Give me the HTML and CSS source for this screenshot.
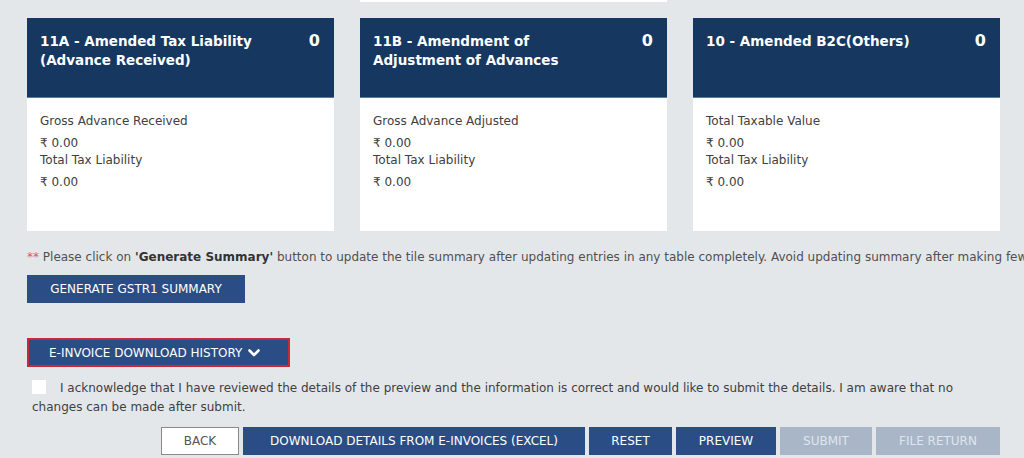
FILE: index.html
```html
<!DOCTYPE html>
<html lang="en">
<head>
<meta charset="utf-8">
<title>GSTR1</title>
<link rel="stylesheet" href="styles.css">
</head>
<body>
<div class="page">
  <div class="strip">
    <div></div>
    <div class="strip-card"></div>
    <div></div>
  </div>

  <div class="tiles">
    <div class="tile">
      <div class="tile-head">
        <div class="tile-title">11A - Amended Tax Liability (Advance Received)</div>
        <div class="tile-count">0</div>
      </div>
      <div class="tile-body">
        <div class="label">Gross Advance Received</div>
        <div class="value">₹ 0.00</div>
        <div class="label">Total Tax Liability</div>
        <div class="value">₹ 0.00</div>
      </div>
    </div>
    <div class="tile">
      <div class="tile-head">
        <div class="tile-title">11B - Amendment of Adjustment of Advances</div>
        <div class="tile-count">0</div>
      </div>
      <div class="tile-body">
        <div class="label">Gross Advance Adjusted</div>
        <div class="value">₹ 0.00</div>
        <div class="label">Total Tax Liability</div>
        <div class="value">₹ 0.00</div>
      </div>
    </div>
    <div class="tile">
      <div class="tile-head">
        <div class="tile-title">10 - Amended B2C(Others)</div>
        <div class="tile-count">0</div>
      </div>
      <div class="tile-body">
        <div class="label">Total Taxable Value</div>
        <div class="value">₹ 0.00</div>
        <div class="label">Total Tax Liability</div>
        <div class="value">₹ 0.00</div>
      </div>
    </div>
  </div>

  <p class="note"><span class="stars">**</span> Please click on <b>'Generate Summary'</b> button to update the tile summary after updating entries in any table completely. Avoid updating summary after making few changes.</p>

  <button class="btn btn-generate">GENERATE GSTR1 SUMMARY</button>

  <div class="einv-wrap">
    <button class="btn btn-einv">E-INVOICE DOWNLOAD HISTORY
      <svg class="chev" viewBox="0 0 12 10" width="12" height="10"><path d="M1.5 2.5 L6 7 L10.5 2.5" fill="none" stroke="#fff" stroke-width="2.6" stroke-linecap="round" stroke-linejoin="round"/></svg>
    </button>
  </div>

  <div class="ack">
    <span class="check"></span><span class="ack-text">I acknowledge that I have reviewed the details of the preview and the information is correct and would like to submit the details. I am aware that no changes can be made after submit.</span>
  </div>

  <div class="actions">
    <button class="btn btn-light">BACK</button>
    <button class="btn btn-download">DOWNLOAD DETAILS FROM E-INVOICES (EXCEL)</button>
    <button class="btn btn-reset">RESET</button>
    <button class="btn btn-preview">PREVIEW</button>
    <button class="btn btn-disabled btn-submit">SUBMIT</button>
    <button class="btn btn-disabled btn-file">FILE RETURN</button>
  </div>
</div>
</body>
</html>
```

FILE: styles.css
```css
html, body {
  margin: 0;
  padding: 0;
  background: #e4e7ea;
  overflow: hidden;
}

body {
  font-family: "DejaVu Sans", Verdana, sans-serif;
  font-size: 12px;
  color: #404040;
  width: 1024px;
  height: 458px;
}

.page {
  padding: 0 24px 0 27px;
}

.strip {
  display: grid;
  grid-template-columns: 307px 307px 307px;
  column-gap: 26px;
  height: 2px;
}

.strip-card {
  background: #ffffff;
}

.tiles {
  display: grid;
  grid-template-columns: 307px 307px 307px;
  column-gap: 26px;
  margin-top: 16px;
}

.tile {
  background: #ffffff;
  height: 213px;
  display: flex;
  flex-direction: column;
}

.tile-head {
  background: #163760;
  height: 80px;
  box-sizing: border-box;
  padding: 14px 14px 0 13px;
  display: flex;
  justify-content: space-between;
  align-items: flex-start;
  color: #ffffff;
  border-bottom: 1px solid #5a7aa3;
}

.tile-title {
  font-weight: bold;
  font-size: 13.5px;
  line-height: 19px;
  width: 240px;
}

.tile-count {
  font-weight: bold;
  font-size: 16px;
  line-height: 17px;
}

.tile-body {
  padding: 15px 13px 0 13px;
}

.label {
  line-height: 17px;
}

.value {
  line-height: 17px;
  margin-top: 5px;
}

.note {
  margin: 18px 0 0 0;
  width: 997px;
  overflow: hidden;
  white-space: nowrap;
  line-height: 17px;
  color: #505050;
}

.note b {
  color: #333;
}

.stars {
  color: #e05a5a;
}

.btn {
  font-family: "DejaVu Sans", Verdana, sans-serif;
  font-size: 12px;
  border: none;
  color: #ffffff;
  background: #2b4d85;
  height: 28px;
  padding: 0 22px;
  cursor: pointer;
  white-space: nowrap;
}

.btn-generate {
  display: block;
  margin-top: 9px;
  width: 218px;
  padding: 0;
}

.einv-wrap {
  margin-top: 35px;
  display: inline-block;
  border: 2px solid #c42a3c;
  line-height: 0;
}

.btn-einv {
  width: 259px;
  height: 25px;
  padding: 0 0 0 20px;
  text-align: left;
  display: inline-flex;
  align-items: center;
  gap: 6px;
}

.chev {
  display: block;
}

.ack {
  margin-top: 12px;
  padding-left: 5px;
  line-height: 19px;
  width: 950px;
}

.check {
  display: inline-block;
  width: 14px;
  height: 14px;
  background: #ffffff;
  vertical-align: -2px;
  margin-right: 14px;
}

.actions {
  margin-top: 10px;
  display: flex;
  justify-content: flex-end;
  gap: 4px;
  width: 973px;
}

.btn-light {
  background: #ffffff;
  color: #555;
  border: 1px solid #8a8a8a;
  width: 78px;
  padding: 0;
}

.btn-download {
  width: 342px;
  padding: 0;
}

.btn-reset {
  width: 83px;
  padding: 0;
}

.btn-preview {
  width: 100px;
  padding: 0;
}

.btn-disabled {
  background: #a9b6c8;
  color: #dfe5ee;
}

.btn-submit {
  width: 92px;
  padding: 0;
}

.btn-file {
  width: 124px;
  padding: 0;
}
```
